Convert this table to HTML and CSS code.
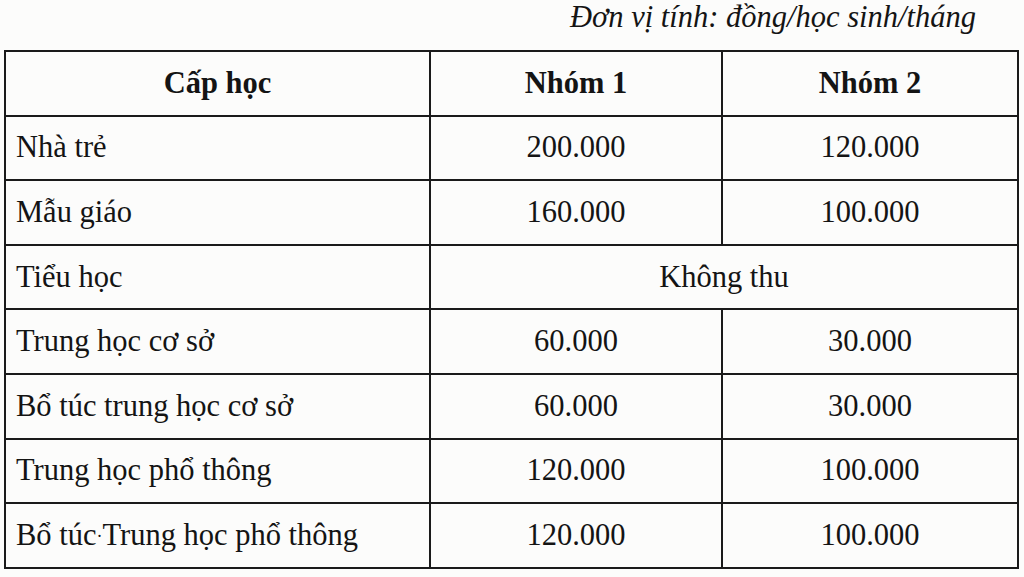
FILE: index.html
```html
<!DOCTYPE html>
<html lang="vi">
<head>
<meta charset="utf-8">
<title>Mức thu học phí</title>
<link rel="stylesheet" href="styles.css">
</head>
<body>
<div class="page">
  <p class="unit">Đơn vị tính: đồng/học sinh/tháng</p>
  <table class="fees">
    <colgroup>
      <col class="c-level">
      <col class="c-g1">
      <col class="c-g2">
    </colgroup>
    <thead>
      <tr>
        <th>Cấp học</th>
        <th>Nhóm 1</th>
        <th>Nhóm 2</th>
      </tr>
    </thead>
    <tbody>
      <tr><td class="lbl">Nhà trẻ</td><td>200.000</td><td>120.000</td></tr>
      <tr><td class="lbl">Mẫu giáo</td><td>160.000</td><td>100.000</td></tr>
      <tr><td class="lbl">Tiểu học</td><td colspan="2">Không thu</td></tr>
      <tr><td class="lbl">Trung học cơ sở</td><td>60.000</td><td>30.000</td></tr>
      <tr><td class="lbl">Bổ túc trung học cơ sở</td><td>60.000</td><td>30.000</td></tr>
      <tr><td class="lbl">Trung học phổ thông</td><td>120.000</td><td>100.000</td></tr>
      <tr><td class="lbl">Bổ túc<span class="dot">·</span>Trung học phổ thông</td><td>120.000</td><td>100.000</td></tr>
    </tbody>
  </table>
</div>
</body>
</html>
```

FILE: styles.css
```css
html, body {
  margin: 0;
  padding: 0;
  background: #fcfcfb;
}
body {
  font-family: "Liberation Serif", "Times New Roman", serif;
  color: #141414;
  width: 1024px;
  height: 577px;
  overflow: hidden;
}
.page {
  padding: 0 0 0 4px;
}
.unit {
  margin: 0;
  height: 50px;
  padding-right: 48px;
  text-align: right;
  font-style: italic;
  font-size: 30.5px;
  line-height: 35px;
  box-sizing: border-box;
}
.fees {
  border-collapse: collapse;
  width: 1013px;
  table-layout: fixed;
  font-size: 30.5px;
}
.c-level { width: 425px; }
.c-g1 { width: 292px; }
.c-g2 { width: 296px; }
.fees th,
.fees td {
  border: 2px solid #1a1a1a;
  height: 64.6px;
  padding: 0;
  text-align: center;
  vertical-align: middle;
  box-sizing: border-box;
}
.fees th {
  font-weight: bold;
}
.fees td.lbl {
  text-align: left;
  padding-left: 10px;
}
.dot {
  font-size: 18px;
  vertical-align: 3px;
}
```
